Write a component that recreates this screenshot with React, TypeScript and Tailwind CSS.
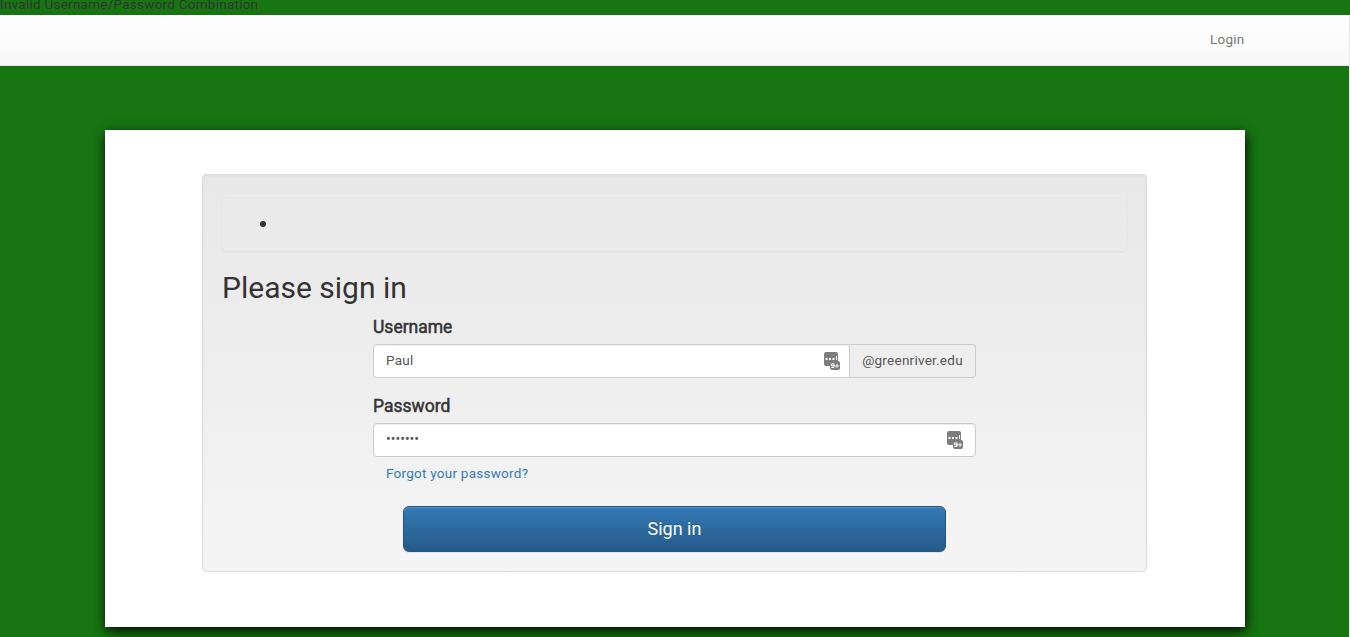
function ManagerIcon() {
  return (
    <svg className="h-[18px] w-4 shrink-0" viewBox="0 0 16 18">
      <rect x="0" y="0" width="14" height="14" rx="2" fill="#7d7d7d" />
      <g fill="#fff">
        <rect x="1.5" y="6" width="2" height="2" />
        <rect x="5" y="6" width="2" height="2" />
        <rect x="8.5" y="6" width="2" height="2" />
        <rect x="12" y="4" width="1" height="4" />
      </g>
      <rect x="6" y="9" width="10" height="9" rx="2" fill="#7d7d7d" />
      <text x="6.6" y="15.5" fontSize="6.5" fontWeight="700" fontFamily="DejaVu Sans" letterSpacing="-0.8" fill="#fff">9+</text>
    </svg>
  );
}

export default function App() {
  return (
    <div className="h-[637px] w-full overflow-hidden bg-[#177612] font-['Roboto',sans-serif] text-[13.5px] leading-5 tracking-[0.25px] text-[#333]">
      <div className="flex h-[15px] items-end">
        <p className="pb-px leading-5">Invalid Username/Password Combination</p>
      </div>
      <nav className="h-[51px] border-b border-r border-[#e7e7e7] bg-gradient-to-b from-white to-[#f8f8f8] shadow-[0_1px_5px_rgba(0,0,0,0.075)]">
        <div className="mx-auto flex w-[1140px] justify-end pt-[14px] text-[#777]">
          <a href="#">Login</a>
        </div>
      </nav>
      <div className="h-[571px] border-r border-[#f4f4f4] pt-16">
        <main className="ml-[105px] h-[497px] w-[1140px] bg-white pt-11 shadow-[1px_4px_12px_rgba(0,0,0,0.95)]">
          <form className="ml-[97px] h-[398px] w-[945px] rounded border border-[#dcdcdc] bg-gradient-to-b from-[#e8e8e8] to-[#f5f5f5] px-[19px] pt-5 shadow-[inset_0_1px_3px_rgba(0,0,0,0.05),0_1px_0_rgba(255,255,255,0.1)]">
            <div className="-mt-px h-[57px] w-[905px] rounded border border-transparent pt-[26px] pl-[37px] shadow-[inset_0_1px_0_rgba(255,255,255,0.25),0_1px_2px_rgba(0,0,0,0.05)]">
              <div className="size-1.5 rounded-full bg-[#333]" />
            </div>
            <h2 className="mt-5 text-[30px] leading-[33px] tracking-normal">Please sign in</h2>
            <div className="ml-[151px] w-[603px]">
              <label htmlFor="username" className="mt-[11px] block h-[29px] text-[17.5px] leading-6 tracking-normal [-webkit-text-stroke:0.5px_#333]">Username</label>
              <div className="flex h-[34px]">
                <div className="flex w-[477px] items-center rounded-l border border-[#ccc] bg-white pr-[9px] pl-3 shadow-[inset_0_1px_1px_rgba(0,0,0,0.075)]">
                  <input id="username" defaultValue="Paul" className="min-w-0 flex-1 pb-0.5 text-[#555] outline-none" />
                  <ManagerIcon />
                </div>
                <span className="flex flex-1 justify-center rounded-r border border-l-0 border-[#ccc] bg-[#eee] pt-[5px] text-[#555]">@greenriver.edu</span>
              </div>
              <label htmlFor="password" className="mt-4 block h-[29px] text-[17.5px] leading-6 tracking-normal [-webkit-text-stroke:0.5px_#333]">Password</label>
              <div className="flex h-[34px] items-center rounded border border-[#ccc] bg-white pr-3 pl-3 shadow-[inset_0_1px_1px_rgba(0,0,0,0.075)]">
                <input id="password" type="password" defaultValue="letters" className="min-w-0 flex-1 pb-[3px] text-sm tracking-normal text-[#555] outline-none" />
                <ManagerIcon />
              </div>
              <a href="#" className="mt-[6px] ml-[13px] block text-[#337ab7]">Forgot your password?</a>
            </div>
            <button type="button" className="mt-[23px] ml-[181px] block h-[46px] w-[543px] rounded-md border border-[#245580] bg-gradient-to-b from-[#337ab7] to-[#265a88] text-[18px] leading-6 tracking-normal text-white shadow-[inset_0_1px_0_rgba(255,255,255,0.15),0_1px_1px_rgba(0,0,0,0.075)] [text-shadow:0_-1px_0_rgba(0,0,0,0.2)]">Sign in</button>
          </form>
        </main>
      </div>
    </div>
  );
}
